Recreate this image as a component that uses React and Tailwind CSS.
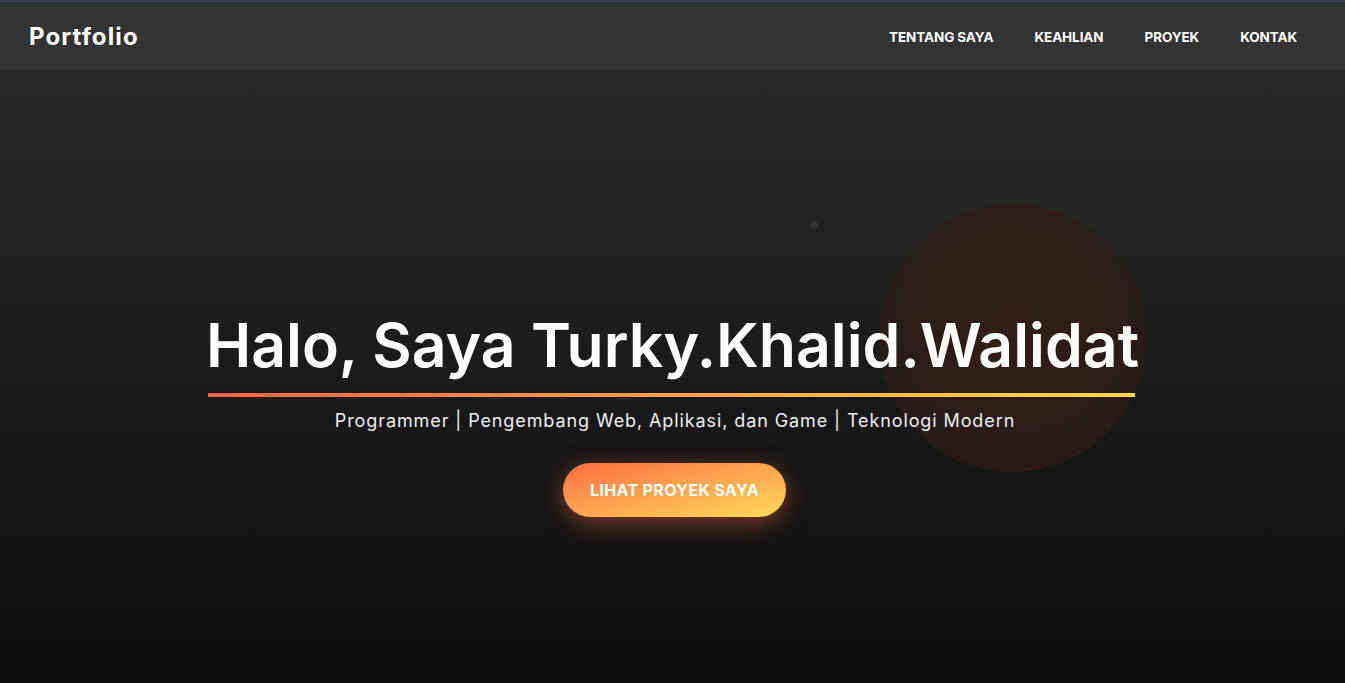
export default function App() {
  const font = { fontFamily: "Inter, 'Open Sans', sans-serif" };
  return (
    <div className="relative h-[683px] overflow-hidden border-t-2 border-[#3a3e50] bg-gradient-to-b from-[#2c2c2c] to-[#0d0d0d] text-white" style={font}>
      <nav className="flex h-[68px] items-center justify-between bg-[#333333] pl-[29px] pr-[48px]">
        <div className="pt-[2px] text-[24px] font-bold tracking-[1.1px]">Portfolio</div>
        <ul className="flex gap-[41px] pt-[2px] text-[13.5px] font-bold tracking-[-0.1px]">
          <li>TENTANG SAYA</li>
          <li>KEAHLIAN</li>
          <li>PROYEK</li>
          <li>KONTAK</li>
        </ul>
      </nav>
      <div className="pointer-events-none absolute left-[879px] top-[202px] h-[268px] w-[268px] rounded-full bg-[radial-gradient(circle_at_50%_45%,#341e1a_0%,#2a1c1a_60%,#231b1a_100%)] opacity-90" />
      <div className="pointer-events-none absolute left-[810px] top-[219px] h-[8px] w-[8px] rounded-full bg-[#333333]" />
      <section className="relative flex flex-col items-center pt-[235px]">
        <h1 className="inline-block text-[60.7px] font-semibold leading-[80px]">
          Halo, Saya Turky.Khalid.Walidat
        </h1>
        <div className="mr-[2px] mt-[8px] h-[4px] w-[927px] bg-gradient-to-r from-[#ff6347] via-[#ff9f4a] to-[#ffd84a]" />
        <p className="ml-[5px] mt-[10px] text-[18px] tracking-[0.9px] text-[#eeeeee]">
          Programmer | Pengembang Web, Aplikasi, dan Game | Teknologi Modern
        </p>
        <button className="ml-[4px] mt-[29px] h-[54px] w-[223px] rounded-full bg-gradient-to-br from-[#ff6b45] to-[#ffd95a] text-[16px] font-bold tracking-[0.35px] text-white shadow-[0_6px_24px_rgba(255,110,60,0.45)]">
          LIHAT PROYEK SAYA
        </button>
      </section>
    </div>
  );
}
